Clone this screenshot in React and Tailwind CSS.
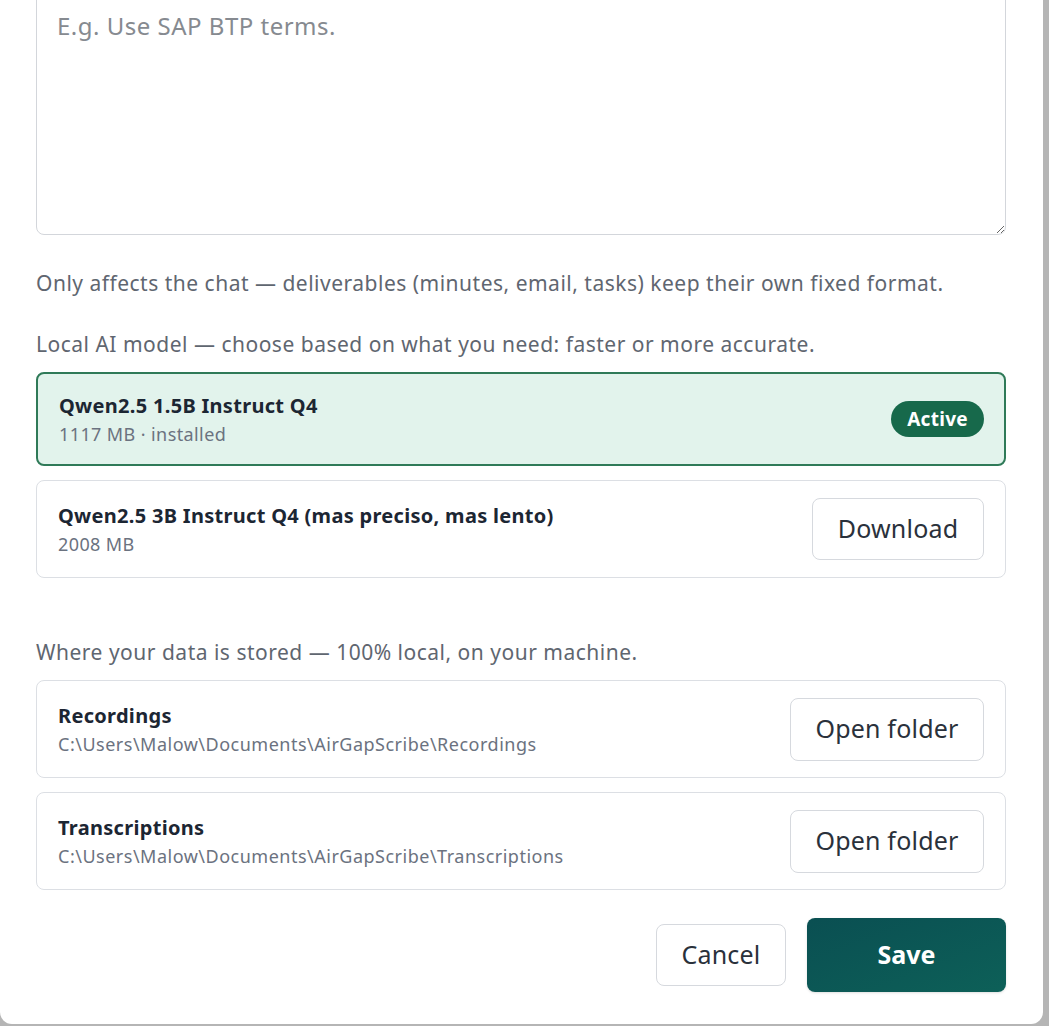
import React from "react";

const font = { fontFamily: '"Noto Sans", "Open Sans", sans-serif' };

function ModelCard({ name, meta, active }) {
  return (
    <div
      className={
        active
          ? "flex items-center justify-between rounded-lg border-2 border-[#2f7a58] bg-[#e2f3ec] pl-[21px] pr-[20px] h-[94px]"
          : "flex items-center justify-between rounded-lg border border-[#dcdfe4] bg-white pl-[21px] pr-[21px] h-[98px]"
      }
    >
      <div className="flex flex-col">
        <span className="text-[20px] font-bold text-[#1c2633] leading-[26px] tracking-[0.3px]">{name}</span>
        <span className="text-[18px] text-[#6b7280] leading-[24px] mt-[3px] tracking-[0.4px]">{meta}</span>
      </div>
      {active ? (
        <span className="rounded-full bg-[#17694b] text-white text-[19px] font-bold tracking-[0.3px] px-[16px] h-[36px] flex items-center">
          Active
        </span>
      ) : (
        <button className="rounded-lg border border-[#d6d9de] bg-white text-[#2a313b] text-[25px] tracking-[0.2px] w-[172px] h-[62px]">
          Download
        </button>
      )}
    </div>
  );
}

function FolderCard({ name, path }) {
  return (
    <div className="flex items-center justify-between rounded-lg border border-[#dcdfe4] bg-white pl-[21px] pr-[21px] h-[98px]">
      <div className="flex flex-col">
        <span className="text-[20px] font-bold text-[#1c2633] leading-[26px] tracking-[0.3px]">{name}</span>
        <span className="text-[18px] text-[#6b7280] leading-[24px] mt-[3px] tracking-[0.5px]">{path}</span>
      </div>
      <button className="rounded-lg border border-[#d6d9de] bg-white text-[#2a313b] text-[25px] tracking-[0.2px] w-[194px] h-[63px]">
        Open folder
      </button>
    </div>
  );
}

export default function App() {
  return (
    <div className="min-h-screen bg-[#b5b5b5] overflow-hidden" style={font}>
      <div className="w-[1043px] h-[1024px] bg-white rounded-br-xl rounded-bl-xl overflow-hidden flex flex-col pl-[36px] pr-[37px]">
        <textarea
          placeholder="E.g. Use SAP BTP terms."
          className="-mt-[10px] h-[245px] w-full resize-y rounded-lg border border-[#d3d6db] bg-white px-[20px] pt-[20px] text-[24px] leading-[30px] tracking-[0.5px] text-[#333] placeholder:text-[#868a90] outline-none"
        />
        <p className="mt-[35px] text-[21px] leading-[26px] text-[#5f6670] tracking-[0.5px]">
          Only affects the chat — deliverables (minutes, email, tasks) keep their own fixed format.
        </p>
        <p className="mt-[35px] text-[21px] leading-[26px] text-[#5f6670] tracking-[0.5px]">
          Local AI model — choose based on what you need: faster or more accurate.
        </p>
        <div className="mt-[15px] flex flex-col gap-[14px]">
          <ModelCard name="Qwen2.5 1.5B Instruct Q4" meta="1117 MB · installed" active />
          <ModelCard name="Qwen2.5 3B Instruct Q4 (mas preciso, mas lento)" meta="2008 MB" />
        </div>
        <p className="mt-[61px] text-[21px] leading-[26px] text-[#5f6670] tracking-[0.5px]">
          Where your data is stored — 100% local, on your machine.
        </p>
        <div className="mt-[15px] flex flex-col gap-[14px]">
          <FolderCard name="Recordings" path="C:\Users\Malow\Documents\AirGapScribe\Recordings" />
          <FolderCard name="Transcriptions" path="C:\Users\Malow\Documents\AirGapScribe\Transcriptions" />
        </div>
        <div className="mt-[28px] flex items-center justify-end gap-[21px]">
          <button className="rounded-lg border border-[#d6d9de] bg-white text-[#2a313b] text-[25px] tracking-[0.2px] w-[130px] h-[62px]">
            Cancel
          </button>
          <button className="rounded-lg bg-gradient-to-br from-[#0a4f52] to-[#0d6058] text-white text-[25px] font-bold w-[199px] h-[74px] shadow-sm">
            Save
          </button>
        </div>
      </div>
    </div>
  );
}
